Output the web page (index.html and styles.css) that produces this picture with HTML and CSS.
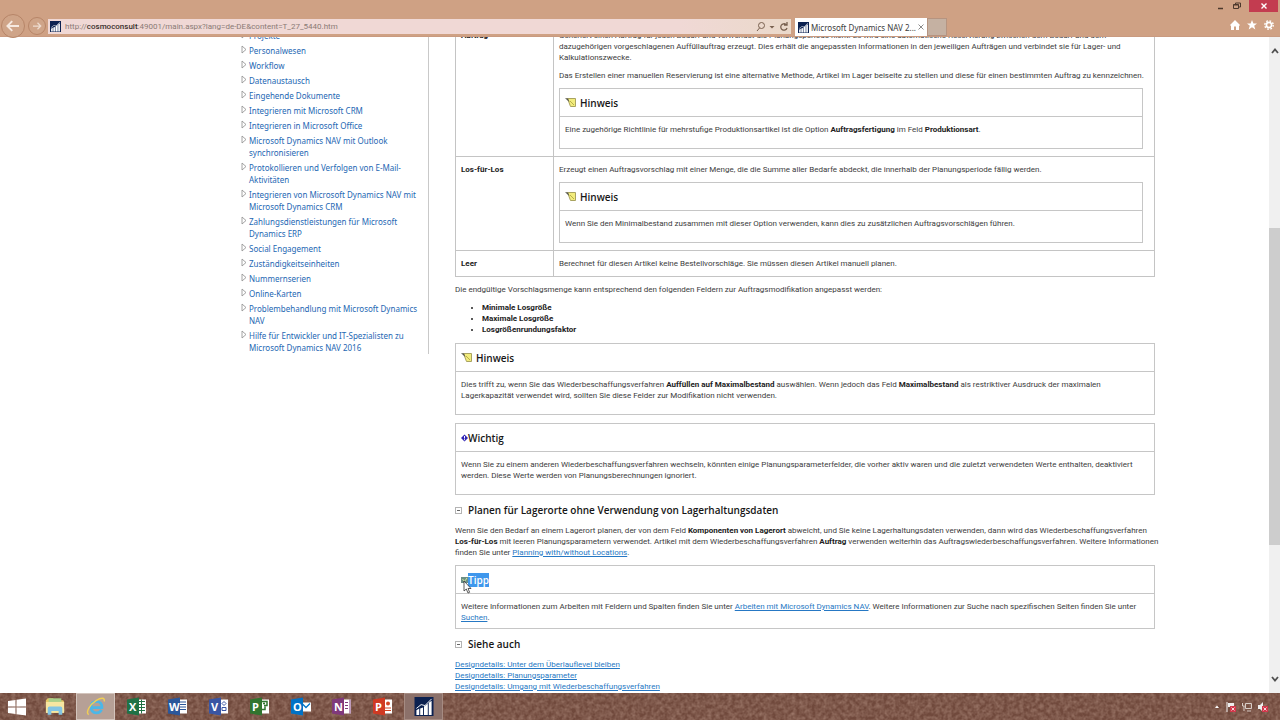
FILE: index.html
```html
<!DOCTYPE html>
<html lang="de">
<head>
<meta charset="utf-8">
<title>Microsoft Dynamics NAV 2016</title>
<link rel="stylesheet" href="styles.css">
</head>
<body>
<svg class="defs" aria-hidden="true">
  <symbol id="nav" viewBox="0 0 20 20"><rect width="20" height="20" fill="#0c2150"/><path d="M2 19v-5l3-2v7zM6 19v-7l3-1v8zM10 19v-9l4-3v12zM15 19V6l3-2v15z" fill="#fff"/><path d="M2 12l5-4 4 1 7-7" fill="none" stroke="#fff"/></symbol>
  <symbol id="note" viewBox="0 0 12 12"><path d="M2.500 1.500h8v8h-5z" fill="#f2ec7c" stroke="#a9a360"/><path d="M0 1l3 .5 1.500 3.500L2 3z" fill="#55554a"/><path d="M5 4l4 4" stroke="#b9b04c"/></symbol>
  <symbol id="tri" viewBox="0 0 6 9"><path d="M1 1v7l4-3.500z" fill="#fff" stroke="#8d8d8d" stroke-width=".8"/></symbol>
  <symbol id="minus" viewBox="0 0 7 7"><rect x=".5" y=".5" width="6" height="6" fill="#fff" stroke="#b4b4b4"/><path d="M2 3.500h3" stroke="#666"/></symbol>
</svg>
<div class="window">
  <header class="chrome">
    <button class="round back" aria-label="Zurück"><svg viewBox="0 0 24 24"><path d="M20 12H5M11 5.500L4.500 12l6.500 6.500" fill="none" stroke="#f6e9e0" stroke-width="2.500"/></svg></button>
    <button class="round forward" aria-label="Vorwärts"><svg viewBox="0 0 24 24"><path d="M4 12h15M13 5.500l6.500 6.500-6.500 6.500" fill="none" stroke="#eedccf" stroke-width="2.500"/></svg></button>
    <div class="address">
      <svg class="fav"><use href="#nav"/></svg>
      <span class="url">http://<b>cosmoconsult</b>:49001/main.aspx?lang=de-DE&amp;content=T_27_5440.htm</span>
      <button class="plain" aria-label="Suchen"><svg width="20" height="12" viewBox="0 0 20 12" fill="none" stroke="#78604f"><circle cx="6.500" cy="4.500" r="3"/><path d="M4.500 7L2 10"/><path d="M14.500 5h5L17 7.500z" fill="#78604f" stroke="none"/></svg></button>
      <button class="plain" aria-label="Aktualisieren"><svg width="10" height="12" viewBox="0 0 10 12" fill="none" stroke="#78604f" stroke-width="1.300"><path d="M7 3.500A3.200 3.200 0 1 0 8 7M8 1v3H5"/></svg></button>
    </div>
    <div class="tab"><svg class="fav"><use href="#nav"/></svg><span>Microsoft Dynamics NAV 2...</span><button class="plain" aria-label="Tab schließen"><svg width="6" height="6" viewBox="0 0 6 6"><path d="M.5.5l5 5M5.500.5l-5 5" stroke="#8a8a8a"/></svg></button></div>
    <button class="newtab" aria-label="Neuer Tab"></button>
    <div class="right">
      <div class="wincontrols">
        <button class="plain" aria-label="Minimieren"><svg width="8" height="8" viewBox="0 0 8 8"><path d="M1 6.500h5" stroke="#4c382c" stroke-width="1.500"/></svg></button>
        <button class="plain" aria-label="Wiederherstellen"><svg width="8" height="8" viewBox="0 0 8 8" fill="none" stroke="#4c382c"><path d="M2.500 2V1h5v4H6"/><path d="M.5 2.500h5v4h-5zM.5 3h5"/></svg></button>
        <button class="close" aria-label="Schließen"><svg width="6" height="6" viewBox="0 0 6 6"><path d="M.5.5l5 5M5.500.5l-5 5" stroke="#fff" stroke-width="1.400"/></svg></button>
      </div>
      <div class="tools">
        <button class="plain" aria-label="Startseite"><svg width="10" height="10" viewBox="0 0 10 10"><path d="M5 0l5 5-1 1v4H6V6.500H4V10H1V6L0 5z" fill="#fff"/></svg></button>
        <button class="plain" aria-label="Favoriten"><svg width="10" height="10" viewBox="0 0 10 10"><path d="M5 0l1.400 3.500H10L7.200 5.800 8.300 9.500 5 7.300 1.700 9.500l1.100-3.700L0 3.500h3.600z" fill="#fff"/></svg></button>
        <button class="plain" aria-label="Extras"><svg width="10" height="10" viewBox="0 0 10 10" fill="none" stroke="#fff"><circle cx="5" cy="5" r="2.600" stroke-width="1.700"/><circle cx="5" cy="5" r="4.200" stroke-width="1.400" stroke-dasharray="1.700 1.600"/></svg></button>
      </div>
    </div>
  </header>

  <main class="view">
    <div class="page">
      <nav class="toc">
        <ul>
          <li><svg><use href="#tri"/></svg><a href="#">Projekte</a></li>
          <li><svg><use href="#tri"/></svg><a href="#">Personalwesen</a></li>
          <li><svg><use href="#tri"/></svg><a href="#">Workflow</a></li>
          <li><svg><use href="#tri"/></svg><a href="#">Datenaustausch</a></li>
          <li><svg><use href="#tri"/></svg><a href="#">Eingehende Dokumente</a></li>
          <li><svg><use href="#tri"/></svg><a href="#">Integrieren mit Microsoft CRM</a></li>
          <li><svg><use href="#tri"/></svg><a href="#">Integrieren in Microsoft Office</a></li>
          <li><svg><use href="#tri"/></svg><a href="#">Microsoft Dynamics NAV mit Outlook<br>synchronisieren</a></li>
          <li><svg><use href="#tri"/></svg><a href="#">Protokollieren und Verfolgen von E-Mail-<br>Aktivitäten</a></li>
          <li><svg><use href="#tri"/></svg><a href="#">Integrieren von Microsoft Dynamics NAV mit<br>Microsoft Dynamics CRM</a></li>
          <li><svg><use href="#tri"/></svg><a href="#">Zahlungsdienstleistungen für Microsoft<br>Dynamics ERP</a></li>
          <li><svg><use href="#tri"/></svg><a href="#">Social Engagement</a></li>
          <li><svg><use href="#tri"/></svg><a href="#">Zuständigkeitseinheiten</a></li>
          <li><svg><use href="#tri"/></svg><a href="#">Nummernserien</a></li>
          <li><svg><use href="#tri"/></svg><a href="#">Online-Karten</a></li>
          <li><svg><use href="#tri"/></svg><a href="#">Problembehandlung mit Microsoft Dynamics<br>NAV</a></li>
          <li><svg><use href="#tri"/></svg><a href="#">Hilfe für Entwickler und IT-Spezialisten zu<br>Microsoft Dynamics NAV 2016</a></li>
        </ul>
      </nav>
      <article class="topic">
        <table class="options">
          <tr>
            <th scope="row">Auftrag</th>
            <td>
              <p>Generiert einen Auftrag für jeden Bedarf und verwendet die Planungsperiode nicht. Es wird eine automatische Reservierung zwischen dem Bedarf und dem<br>dazugehörigen vorgeschlagenen Auffüllauftrag erzeugt. Dies erhält die angepassten Informationen in den jeweiligen Aufträgen und verbindet sie für Lager- und<br>Kalkulationszwecke.</p>
              <p>Das Erstellen einer manuellen Reservierung ist eine alternative Methode, Artikel im Lager beiseite zu stellen und diese für einen bestimmten Auftrag zu kennzeichnen.</p>
              <section class="alert"><h3><svg class="note"><use href="#note"/></svg>Hinweis</h3><p>Eine zugehörige Richtlinie für mehrstufige Produktionsartikel ist die Option <b>Auftragsfertigung</b> im Feld <b>Produktionsart</b>.</p></section>
            </td>
          </tr>
          <tr>
            <th scope="row">Los-für-Los</th>
            <td>
              <p>Erzeugt einen Auftragsvorschlag mit einer Menge, die die Summe aller Bedarfe abdeckt, die innerhalb der Planungsperiode fällig werden.</p>
              <section class="alert"><h3><svg class="note"><use href="#note"/></svg>Hinweis</h3><p>Wenn Sie den Minimalbestand zusammen mit dieser Option verwenden, kann dies zu zusätzlichen Auftragsvorschlägen führen.</p></section>
            </td>
          </tr>
          <tr>
            <th scope="row">Leer</th>
            <td><p>Berechnet für diesen Artikel keine Bestellvorschläge. Sie müssen diesen Artikel manuell planen.</p></td>
          </tr>
        </table>
        <p class="intro">Die endgültige Vorschlagsmenge kann entsprechend den folgenden Feldern zur Auftragsmodifikation angepasst werden:</p>
        <ul class="fields"><li>Minimale Losgröße</li><li>Maximale Losgröße</li><li>Losgrößenrundungsfaktor</li></ul>
        <section class="alert"><h3><svg class="note"><use href="#note"/></svg>Hinweis</h3><p>Dies trifft zu, wenn Sie das Wiederbeschaffungsverfahren <b>Auffüllen auf Maximalbestand</b> auswählen. Wenn jedoch das Feld <b>Maximalbestand</b> als restriktiver Ausdruck der maximalen<br>Lagerkapazität verwendet wird, sollten Sie diese Felder zur Modifikation nicht verwenden.</p></section>
        <section class="alert"><h3><svg class="mini" viewBox="0 0 7 8"><path d="M3.500.5L7 4 3.500 7.500 0 4z" fill="#3024b5"/><path d="M3.500 2v2.500M3.500 5.200v1" stroke="#fff"/></svg>Wichtig</h3><p>Wenn Sie zu einem anderen Wiederbeschaffungsverfahren wechseln, könnten einige Planungsparameterfelder, die vorher aktiv waren und die zuletzt verwendeten Werte enthalten, deaktiviert<br>werden. Diese Werte werden von Planungsberechnungen ignoriert.</p></section>
        <h2><svg><use href="#minus"/></svg>Planen für Lagerorte ohne Verwendung von Lagerhaltungsdaten</h2>
        <p class="text">Wenn Sie den Bedarf an einem Lagerort planen, der von dem Feld <b>Komponenten von Lagerort</b> abweicht, und Sie keine Lagerhaltungsdaten verwenden, dann wird das Wiederbeschaffungsverfahren<br><b>Los-für-Los</b> mit leeren Planungsparametern verwendet. Artikel mit dem Wiederbeschaffungsverfahren <b>Auftrag</b> verwenden weiterhin das Auftragswiederbeschaffungsverfahren. Weitere Informationen<br>finden Sie unter <a href="#">Planning with/without Locations</a>.</p>
        <section class="alert tip"><h3><svg class="mini" viewBox="0 0 7 8"><rect y="1" width="7" height="6" fill="#6b8f86"/><path d="M1.500 3l2 2.500L6 2" fill="none" stroke="#d3e6a0"/></svg><mark>Tipp</mark><svg class="cursor" viewBox="0 0 9 14"><path d="M1 1v10l2.300-2L5 13l1.600-.7L5 8.500h3z" fill="#fff" stroke="#333" stroke-width=".8"/></svg></h3><p>Weitere Informationen zum Arbeiten mit Feldern und Spalten finden Sie unter <a href="#">Arbeiten mit Microsoft Dynamics NAV</a>. Weitere Informationen zur Suche nach spezifischen Seiten finden Sie unter<br><a href="#">Suchen</a>.</p></section>
        <h2><svg><use href="#minus"/></svg>Siehe auch</h2>
        <p class="text"><a href="#">Designdetails: Unter dem Überlauflevel bleiben</a><br><a href="#">Designdetails: Planungsparameter</a><br><a href="#">Designdetails: Umgang mit Wiederbeschaffungsverfahren</a></p>
      </article>
    </div>
    <div class="scroll">
      <button class="plain" aria-label="Nach oben"><svg width="8" height="6" viewBox="0 0 8 6"><path d="M1 5l3-3.500L7 5" fill="none" stroke="#505050" stroke-width="1.800"/></svg></button>
      <div class="track"><div class="thumb"></div></div>
      <button class="plain" aria-label="Nach unten"><svg width="8" height="6" viewBox="0 0 8 6"><path d="M1 1l3 3.500L7 1" fill="none" stroke="#505050" stroke-width="1.800"/></svg></button>
    </div>
  </main>

  <footer class="taskbar">
    <svg class="grain" aria-hidden="true"><filter id="n"><feTurbulence type="fractalNoise" baseFrequency=".25" numOctaves="2" seed="4"/><feColorMatrix values="0 0 0 0 .62  0 0 0 0 .42  0 0 0 0 .34  .7 0 0 0 -.2"/></filter><rect width="100%" height="100%" filter="url(#n)"/></svg>
    <div class="apps">
      <button class="start" aria-label="Start"><svg width="18" height="18" viewBox="0 0 18 18" fill="#fff"><path d="M0 3l7.500-1v6.500H0zM8.500 1.800L18 .5v8H8.500zM0 9.500h7.500V16L0 15zM8.500 9.500H18v8l-9.500-1.300z"/></svg></button>
      <button aria-label="Explorer"><svg viewBox="0 0 22 20"><path d="M1 3l2-2h6l1 2h10l1 2v12H1z" fill="#e4c766"/><path d="M4 1h14v4H4z" fill="#a9d08b"/><path d="M1 5h20v12H1z" fill="#f6e6a1"/><path d="M3 19v-7q0-2 2-2h12q2 0 2 2v7h-4v-4H7v4z" fill="#82c4e3"/></svg></button>
      <button class="on" aria-label="Internet Explorer"><svg viewBox="0 0 22 20"><path d="M17 13.500q-1.500 3.500-5.500 3.500-6-.3-6-6.500 0-6 6-6 6.200 0 6 6.800H7" fill="none" stroke="#4bb7e8" stroke-width="3"/><path d="M3 19C-1 17 4 8 11 3.500 17 0 21 0 20 4.500" fill="none" stroke="#f0cf54" stroke-width="1.600"/></svg></button>
      <button aria-label="Excel"><svg viewBox="0 0 20 18"><path d="M10 2h9v14h-9z" fill="#fff"/><path d="M11 4h7M11 7h7M11 10h7M11 13h7M14.500 2v14" stroke="#207245"/><path d="M0 2l12-2v18L0 16z" fill="#207245"/><text x="2" y="13">X</text></svg></button>
      <button aria-label="Word"><svg viewBox="0 0 20 18"><path d="M10 2h9v14h-9z" fill="#fff"/><path d="M11 4.500h7M11 7h7M11 9.500h7M11 12h7" stroke="#2b579a"/><path d="M0 2l12-2v18L0 16z" fill="#2b579a"/><text x="1" y="13">W</text></svg></button>
      <button aria-label="Visio"><svg viewBox="0 0 20 18"><path d="M10 2h9v14h-9z" fill="#fff"/><path d="M15 4l2 2-2 2-2-2zM13 10h4v3h-4z" fill="none" stroke="#3955a3"/><path d="M0 2l12-2v18L0 16z" fill="#3955a3"/><text x="2" y="13">V</text></svg></button>
      <button aria-label="Project"><svg viewBox="0 0 20 18"><path d="M10 2h9v14h-9z" fill="#fff"/><path d="M12 4h5v4h-3M12 12h3V9M13 6h2" fill="none" stroke="#31752f" stroke-width="1.500"/><path d="M0 2l12-2v18L0 16z" fill="#31752f"/><text x="2" y="13">P</text></svg></button>
      <button aria-label="Outlook"><svg viewBox="0 0 20 18"><path d="M10 5h10v9H10z" fill="#fff"/><path d="M11 6l4 4 4-4" fill="none" stroke="#0072c6" stroke-width="1.300"/><path d="M0 2l12-2v18L0 16z" fill="#0072c6"/><text x="2" y="13">O</text></svg></button>
      <button aria-label="OneNote"><svg viewBox="0 0 20 18"><path d="M10 2h9v14h-9z" fill="#fff"/><path d="M13 5h3M13 8h3M13 11h3M18 2v14" stroke="#80397b"/><path d="M0 2l12-2v18L0 16z" fill="#80397b"/><text x="2" y="13">N</text></svg></button>
      <button aria-label="PowerPoint"><svg viewBox="0 0 20 18"><path d="M10 2h9v14h-9z" fill="#fff"/><circle cx="15" cy="6" r="2" fill="#d24726"/><path d="M12 10.500h6M12 13h6" stroke="#d24726"/><path d="M0 2l12-2v18L0 16z" fill="#d03a23"/><text x="2" y="13">P</text></svg></button>
      <button class="run" aria-label="Dynamics NAV"><svg><use href="#nav"/></svg></button>
    </div>
    <div class="tray">
      <svg width="6" height="10" viewBox="0 0 6 10"><path d="M1 6l2-2.500L5 6z" fill="#fff"/></svg>
      <svg width="10" height="10" viewBox="0 0 10 10"><path d="M1 0v10" stroke="#eee"/><path d="M2 1h6v4H2z" fill="#eee"/><path d="M4 4h6v6H4z" fill="#d2374b"/><path d="M5.500 5.500l3 3M8.500 5.500l-3 3" stroke="#fff" stroke-width=".8"/></svg>
      <svg width="10" height="10" viewBox="0 0 10 10" fill="none" stroke="#d8ccc6"><path d="M3.500 1.500h6v5h-6zM5 9h4M.5 1v3h2M2 4v5"/></svg>
      <svg width="10" height="10" viewBox="0 0 10 10"><path d="M0 3h2l3-3v10L2 7H0z" fill="#eee"/><path d="M4 4h6v6H4z" fill="#d2374b"/><path d="M5.500 5.500l3 3M8.500 5.500l-3 3" stroke="#fff" stroke-width=".8"/></svg>
    </div>
  </footer>
</div>
</body>
</html>
```
FILE: styles.css
```css
* { box-sizing: border-box; }
body { margin: 0; font: 8px/11px Roboto, "Noto Sans", sans-serif; color: #3c3c3c; background: #fff; }
button { margin: 0; padding: 0; border: 0; background: none; font: inherit; color: inherit; }
svg { display: block; flex: none; }
p, h2, h3, ul { margin: 0; padding: 0; }
.defs { position: absolute; width: 0; height: 0; }
.window { display: flex; flex-direction: column; height: 100vh; overflow: hidden; }
.plain { display: grid; place-items: center; }

.chrome { display: flex; align-items: flex-end; flex: none; height: 37px; padding-left: 1px; background: #cfa184; border-bottom: 1px solid #c99a80; position: relative; z-index: 1; }
.round { flex: none; border: 1px solid #b78568; border-radius: 50%; display: grid; place-items: center; background: #cfa488; }
.back { width: 24px; height: 24px; margin-bottom: -2px; }
.back svg { width: 18px; }
.forward { width: 18px; height: 18px; margin: 0 2px 1px 3px; }
.forward svg { width: 12px; }
.address { flex: 1; display: flex; align-items: center; gap: 4px; height: 15px; margin: 0 4px 2px 0; padding: 0 2px; background: linear-gradient(90deg, #f0d8d5 85%, #ead9ca); }
.fav { width: 11px; height: 11px; }
.url { flex: 1; color: #8b7b75; white-space: nowrap; }
.url b { color: #3a302c; font-weight: 500; }
.tab { display: flex; align-items: center; gap: 2px; width: 132px; height: 18px; padding: 0 4px 0 3px; background: #fff; font-family: "Noto Sans", sans-serif; white-space: nowrap; }
.tab span { flex: 1; }
.newtab { width: 20px; height: 18px; background: #c5b1a2; border: 1px solid #b69480; }
.right { width: 333px; height: 36px; display: flex; flex-direction: column; justify-content: space-between; align-items: flex-end; }
.wincontrols { display: flex; align-items: center; gap: 8px; padding-right: 2px; }
.close { width: 29px; height: 12px; display: grid; place-items: center; background: #c33c50; }
.tools { display: flex; gap: 7px; padding: 0 6px 6px 0; }

.view { flex: 1; min-height: 0; display: flex; overflow: hidden; }
.page { flex: 1; min-width: 0; display: grid; grid-template-columns: 188px minmax(0, 1fr); column-gap: 26px; align-items: start; padding: 0 114px 0 241px; margin-top: -7px; white-space: nowrap; }
.toc { border-right: 1px solid #c9c9c9; font-family: "Noto Sans", sans-serif; line-height: 12px; }
.toc ul { list-style: none; }
.toc li { display: flex; gap: 2px; margin-bottom: 3px; }
.toc li:last-child { margin-bottom: 0; }
.toc svg { width: 6px; height: 9px; }
a { color: #2678c4; }
.toc a { color: #2467b3; text-decoration: none; }

.options { width: 100%; border-collapse: collapse; table-layout: fixed; }
.options th, .options td { border: 1px solid #c4c4c4; padding: 7px 5px; text-align: left; vertical-align: top; }
.options td { padding-right: 11px; }
.options tr:first-child th, .options tr:first-child td { padding-top: 0; border-top: 0; }
.options th { width: 98px; font-weight: bold; }
.options p + p { margin-top: 7px; }
.options .alert { margin-top: 7px; }
b, th, .fields { color: #222; }
.alert { border: 1px solid #c6c6c6; }
.alert h3 { display: flex; align-items: center; height: 28px; padding: 1px 5px 0; border-bottom: 1px solid #c6c6c6; font: 600 10px/14px "Open Sans", sans-serif; color: #161616; position: relative; }
.alert p { padding: 7px 5px 13px; }
.note { width: 12px; height: 12px; margin-right: 3px; }
.mini { width: 7px; height: 8px; }
.intro { margin-top: 7px; }
.fields { margin: 7px 0 8px; padding-left: 27px; font-weight: bold; }
.fields li::marker { font-size: 6px; }
.topic > .alert + .alert { margin-top: 8px; }
h2 { display: flex; align-items: center; gap: 6px; margin: 8px 0; font: 600 10px/14px "Open Sans", sans-serif; color: #161616; }
h2 svg { width: 7px; height: 7px; }
.topic > .tip { margin-top: 7px; }
.topic > .tip p { padding-bottom: 5px; }
mark { background: #3f97ec; color: #fff; }
.cursor { position: absolute; left: 7px; top: 14px; width: 9px; height: 14px; }

.scroll { flex: none; width: 11px; display: flex; flex-direction: column; align-items: center; background: #f0f0f0; padding: 11px 0; }
.track { flex: 1; width: 100%; padding: 174px 0 131px; display: flex; }
.thumb { width: 100%; background: #cdcdcd; }

.taskbar { flex: none; height: 27px; display: flex; justify-content: space-between; position: relative; background: #70493c; overflow: hidden; }
.grain { position: absolute; inset: 0; width: 100%; height: 100%; }
.apps, .tray { position: relative; display: flex; align-items: center; }
.apps { gap: 2px; }
.apps button { width: 39px; height: 27px; display: grid; place-items: center; }
.apps .start { width: 33px; }
.apps button svg { width: 20px; height: 19px; }
.apps .start svg { width: 18px; height: 18px; }
.apps button.on { background: #b6a096; border: 1px solid #d3c4bc; }
.apps button.run { background: #8c716a; border: 1px solid #a58b82; }
.apps text { fill: #fff; font: bold 11px "Open Sans", sans-serif; }
.tray { gap: 6px; padding-right: 12px; }
```
